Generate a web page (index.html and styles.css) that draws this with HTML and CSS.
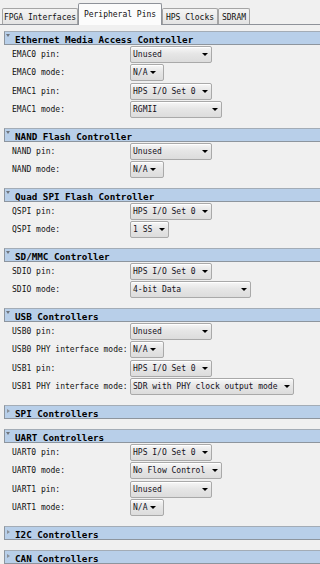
FILE: index.html
```html
<!DOCTYPE html>
<html>
<head>
  <meta charset="utf-8">
  <meta name="viewport" content="width=device-width, initial-scale=1">
  <title>Peripheral Pins</title>
  <link rel="stylesheet" href="styles.css">
</head>
<body>
<div class="tabs">
  <a class="tabs__link tabs__link_fpga" href="#">FPGA Interfaces</a>
  <a class="tabs__link tabs__link_active" href="#">Peripheral Pins</a>
  <a class="tabs__link tabs__link_clocks" href="#">HPS Clocks</a>
  <a class="tabs__link tabs__link_sdram" href="#">SDRAM</a>
</div>

<div class="panel">
  <div class="group">
    <div class="group__head"><span class="group__toggle"></span>Ethernet Media Access Controller</div>
    <div class="group__body">
      <div class="field"><span class="field__label">EMAC0 pin:</span><div class="combo combo_m"><span class="combo__value">Unused</span><span class="combo__arrow"></span></div></div>
      <div class="field"><span class="field__label">EMAC0 mode:</span><div class="combo combo_s"><span class="combo__value">N/A</span><span class="combo__arrow"></span></div></div>
      <div class="field"><span class="field__label">EMAC1 pin:</span><div class="combo combo_m"><span class="combo__value">HPS I/O Set 0</span><span class="combo__arrow"></span></div></div>
      <div class="field"><span class="field__label">EMAC1 mode:</span><div class="combo combo_l"><span class="combo__value">RGMII</span><span class="combo__arrow"></span></div></div>
    </div>
  </div>

  <div class="group">
    <div class="group__head"><span class="group__toggle"></span>NAND Flash Controller</div>
    <div class="group__body">
      <div class="field"><span class="field__label">NAND pin:</span><div class="combo combo_m"><span class="combo__value">Unused</span><span class="combo__arrow"></span></div></div>
      <div class="field"><span class="field__label">NAND mode:</span><div class="combo combo_s"><span class="combo__value">N/A</span><span class="combo__arrow"></span></div></div>
    </div>
  </div>

  <div class="group">
    <div class="group__head"><span class="group__toggle"></span>Quad SPI Flash Controller</div>
    <div class="group__body">
      <div class="field"><span class="field__label">QSPI pin:</span><div class="combo combo_m"><span class="combo__value">HPS I/O Set 0</span><span class="combo__arrow"></span></div></div>
      <div class="field"><span class="field__label">QSPI mode:</span><div class="combo combo_ss"><span class="combo__value">1 SS</span><span class="combo__arrow"></span></div></div>
    </div>
  </div>

  <div class="group">
    <div class="group__head"><span class="group__toggle"></span>SD/MMC Controller</div>
    <div class="group__body">
      <div class="field"><span class="field__label">SDIO pin:</span><div class="combo combo_m"><span class="combo__value">HPS I/O Set 0</span><span class="combo__arrow"></span></div></div>
      <div class="field"><span class="field__label">SDIO mode:</span><div class="combo combo_xl"><span class="combo__value">4-bit Data</span><span class="combo__arrow"></span></div></div>
    </div>
  </div>

  <div class="group">
    <div class="group__head"><span class="group__toggle"></span>USB Controllers</div>
    <div class="group__body">
      <div class="field"><span class="field__label">USB0 pin:</span><div class="combo combo_m"><span class="combo__value">Unused</span><span class="combo__arrow"></span></div></div>
      <div class="field"><span class="field__label">USB0 PHY interface mode:</span><div class="combo combo_s"><span class="combo__value">N/A</span><span class="combo__arrow"></span></div></div>
      <div class="field"><span class="field__label">USB1 pin:</span><div class="combo combo_m"><span class="combo__value">HPS I/O Set 0</span><span class="combo__arrow"></span></div></div>
      <div class="field"><span class="field__label">USB1 PHY interface mode:</span><div class="combo combo_xxl"><span class="combo__value">SDR with PHY clock output mode</span><span class="combo__arrow"></span></div></div>
    </div>
  </div>

  <div class="group group_closed">
    <div class="group__head"><span class="group__toggle"></span>SPI Controllers</div>
  </div>

  <div class="group">
    <div class="group__head"><span class="group__toggle"></span>UART Controllers</div>
    <div class="group__body">
      <div class="field"><span class="field__label">UART0 pin:</span><div class="combo combo_m"><span class="combo__value">HPS I/O Set 0</span><span class="combo__arrow"></span></div></div>
      <div class="field"><span class="field__label">UART0 mode:</span><div class="combo combo_l"><span class="combo__value">No Flow Control</span><span class="combo__arrow"></span></div></div>
      <div class="field"><span class="field__label">UART1 pin:</span><div class="combo combo_m"><span class="combo__value">Unused</span><span class="combo__arrow"></span></div></div>
      <div class="field"><span class="field__label">UART1 mode:</span><div class="combo combo_s"><span class="combo__value">N/A</span><span class="combo__arrow"></span></div></div>
    </div>
  </div>

  <div class="group group_closed">
    <div class="group__head"><span class="group__toggle"></span>I2C Controllers</div>
  </div>

  <div class="group group_closed">
    <div class="group__head"><span class="group__toggle"></span>CAN Controllers</div>
  </div>
</div>
</body>
</html>
```

FILE: styles.css
```css
html,
body {
    margin: 0;
    overflow: hidden;
  }
body {
    background: #f0f0f0;
    color: #101010;
    font-family: "DejaVu Sans Mono", "Liberation Mono", monospace;
    font-size: 8px;
  }

/* tabs */
.tabs {
    display: flex;
    align-items: flex-end;
    height: 24px;
    padding-left: 2px;
    border-bottom: 1px solid #8e9299;
  }
.tabs__link {
    box-sizing: border-box;
    height: 16px;
    padding-top: 3px;
    line-height: 11px;
    text-align: center;
    text-decoration: none;
    color: #101010;
    white-space: nowrap;
    background: linear-gradient(#f4f4f4, #e3e3e3);
    border: 1px solid #a5a5a5;
    border-bottom: 0;
    border-radius: 2px 2px 0 0;
  }
.tabs__link_fpga {
    width: 76px;
  }
.tabs__link_active {
    width: 84px;
    height: 22px;
    padding-top: 5px;
    margin-bottom: -1px;
    background: #fcfcfc;
    border-color: #8e9299;
    position: relative;
  }
.tabs__link_clocks {
    width: 56px;
  }
.tabs__link_sdram {
    width: 32px;
  }

/* groups */
.panel {
    padding-top: 6px;
  }
.group__head {
    box-sizing: border-box;
    display: flex;
    height: 14px;
    margin-left: 4px;
    padding: 3px 0 0 1px;
    line-height: 9px;
    font-size: 9.25px;
    font-weight: bold;
    color: #000;
    white-space: nowrap;
    background: #b8cfe9;
    border-top: 1px solid #a3acb6;
    border-bottom: 1px solid #8d959e;
    border-left: 1px solid #8d959e;
  }
.group__toggle {
    width: 0;
    height: 0;
    margin: -1px 5px 0 0;
    border-left: 2px solid transparent;
    border-right: 2px solid transparent;
    border-top: 3px solid #6e747c;
  }
.group_closed {
    margin-bottom: 10px;
  }
.group_closed .group__toggle {
    margin: 0 5px 0 1px;
    border-top: 2.5px solid transparent;
    border-bottom: 2.5px solid transparent;
    border-left: 3px solid #8a9098;
    border-right: 0;
  }
.group__body {
    padding-bottom: 9px;
  }

/* rows */
.field {
    display: flex;
    align-items: center;
    height: 18.5px;
    padding-left: 12px;
  }
.field__label {
    width: 118px;
    flex-shrink: 0;
    white-space: nowrap;
  }
.combo {
    box-sizing: border-box;
    display: flex;
    align-items: center;
    height: 17px;
    padding: 0 3px 0 2px;
    background: linear-gradient(#f7f7f7, #e6e6e6 45%, #dcdcdc);
    border: 1px solid #a9a9a9;
    border-radius: 2px;
    box-shadow: inset 0 1px 0 #fff;
    white-space: nowrap;
  }
.combo__value {
    color: #14101a;
  }
.combo__arrow {
    width: 0;
    height: 0;
    margin-left: auto;
    border-left: 3px solid transparent;
    border-right: 3px solid transparent;
    border-top: 3px solid #000;
  }
.combo_s {
    width: 34px;
  }
.combo_s .combo__arrow {
    margin-right: 4px;
  }
.combo_ss {
    width: 39px;
  }
.combo_m {
    width: 82px;
  }
.combo_l {
    width: 92px;
  }
.combo_xl {
    width: 121px;
  }
.combo_xxl {
    width: 164px;
  }
```
